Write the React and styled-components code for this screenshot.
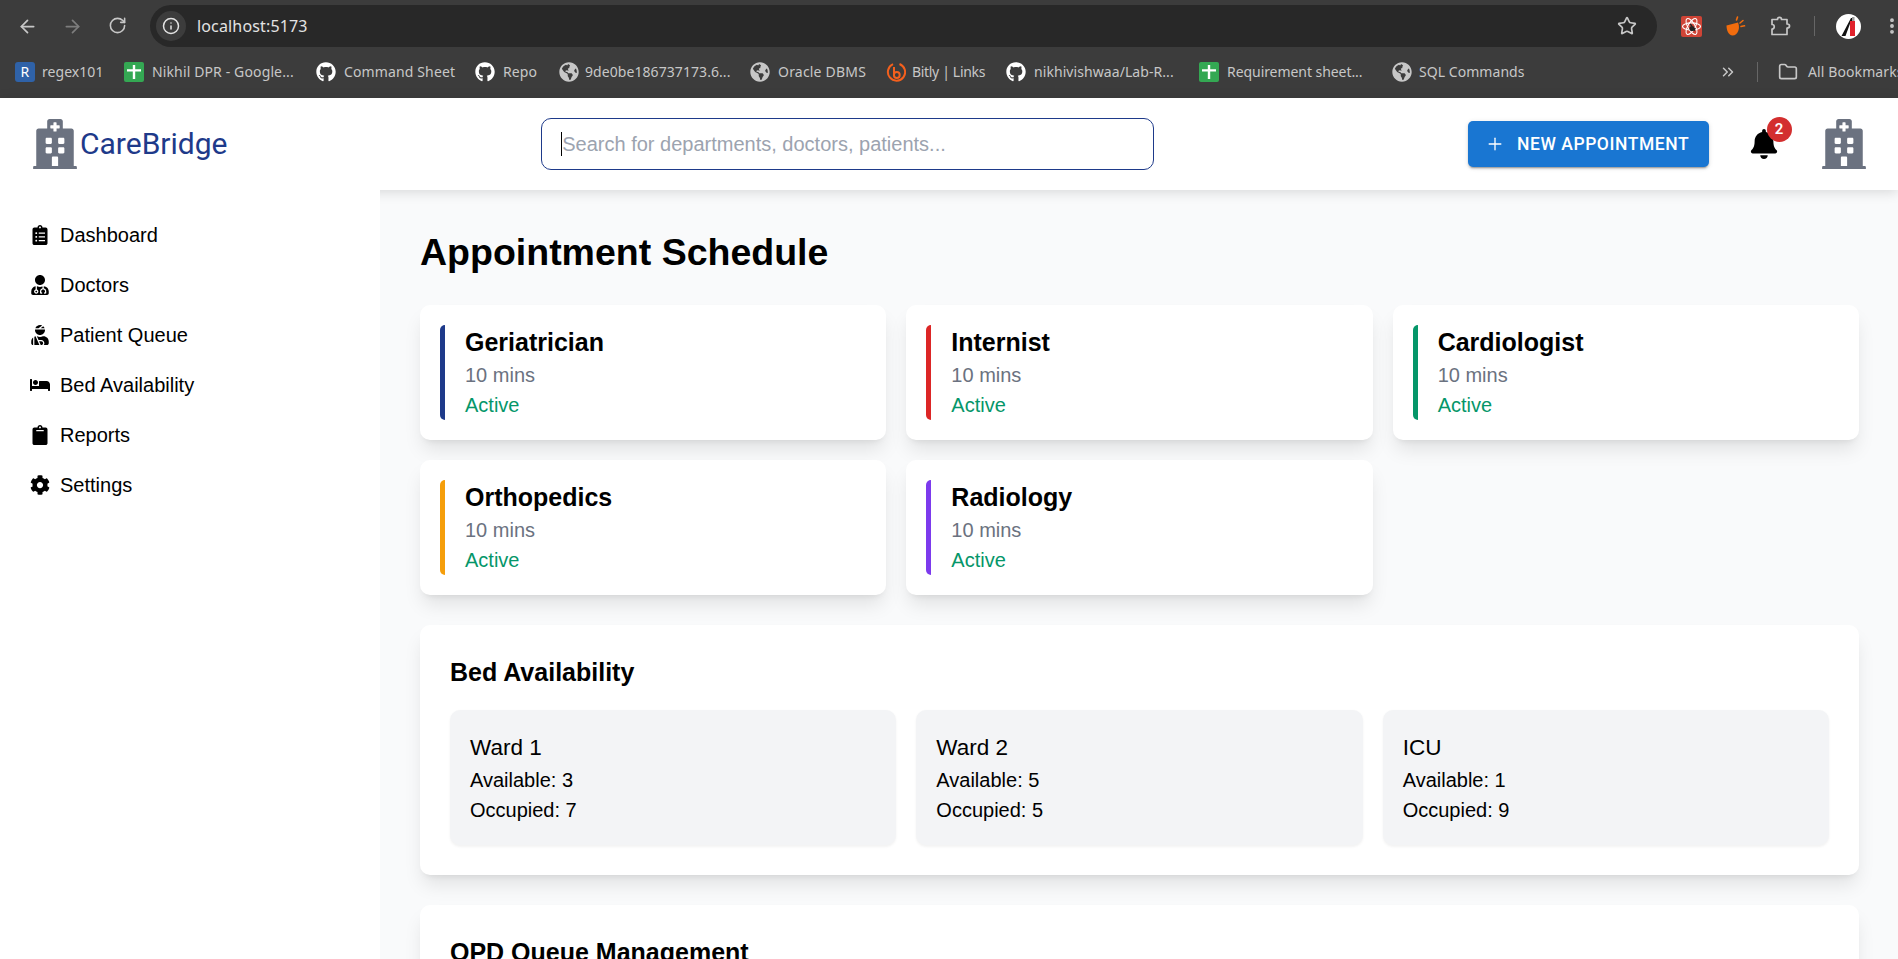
import React from 'react';
import styled, { createGlobalStyle } from 'styled-components';
import { ArrowLeft, ArrowRight, RotateCw, Info, Star, ChevronsRight, Folder, EllipsisVertical, Plus } from 'lucide-react';
import { FaGithub, FaGlobeAmericas } from 'react-icons/fa';
import { FaHospital, FaBell, FaClipboardList, FaUserMd, FaUserInjured, FaBed, FaClipboard, FaCog } from 'react-icons/fa';

const GlobalStyle = createGlobalStyle`
  html, body {
    margin: 0;
    height: 100%;
    overflow: hidden;
    background: #ffffff;
    font-family: "Liberation Sans", Arial, sans-serif;
  }
  * { box-sizing: border-box; }
`;

const cardShadow = '0 12.5px 18.75px -3.75px rgba(0, 0, 0, 0.1), 0 5px 7.5px -5px rgba(0, 0, 0, 0.1)';

const Page = styled.div`
  height: 959px;
  display: flex;
  flex-direction: column;
  overflow: hidden;
`;

/* browser chrome */
const BrowserBar = styled.div`
  flex: 0 0 98px;
  background: #3c3c3c;
  color: #c7c7c7;
  font-family: "Noto Sans", "Open Sans", sans-serif;
  overflow: hidden;
`;

const ToolRow = styled.div`
  height: 47px;
  padding-top: 5px;
  display: flex;
  align-items: center;
`;

const NavButton = styled.div`
  flex: 0 0 45px;
  display: flex;
  justify-content: center;
  color: ${(p) => (p.$dim ? '#7d7d7d' : '#c7c7c7')};
`;

const NavGroup = styled.div`
  flex: 0 0 150px;
  display: flex;
  padding-left: 5px;
`;

const AddressBar = styled.div`
  flex: 0 0 1507px;
  height: 42px;
  border-radius: 21px;
  background: #282828;
  display: flex;
  align-items: center;
  padding: 0 20px 0 6px;
`;

const SiteInfo = styled.div`
  width: 30px;
  height: 30px;
  border-radius: 50%;
  background: #3c3c3c;
  color: #e3e3e3;
  display: flex;
  align-items: center;
  justify-content: center;
  margin-right: 11px;
`;

const Url = styled.span`
  flex: 1;
  color: #e3e3e3;
  font-size: 16px;
  letter-spacing: 0.15px;
`;

const ExtGroup = styled.div`
  display: flex;
  align-items: center;
  padding-left: 11.5px;
  flex-shrink: 0;
`;

const ExtSlot = styled.div`
  flex: 0 0 ${(p) => p.$width}px;
  display: flex;
  justify-content: center;
`;

const ExtDivider = styled.div`
  width: 1px;
  height: 20px;
  background: #666666;
`;

const BookmarkRow = styled.div`
  height: 51px;
  display: flex;
  align-items: center;
  padding: 0 0 2px 15px;
`;

const BookmarkList = styled.div`
  flex: 0 0 1704px;
  display: flex;
  align-items: center;
`;

const Bookmark = styled.div`
  flex: 0 0 ${(p) => p.$width}px;
  display: flex;
  align-items: center;
  gap: ${(p) => p.$gap}px;
  font-size: 14px;
  letter-spacing: ${(p) => p.$spacing}px;
  white-space: nowrap;
`;

const BookmarkEnd = styled.div`
  display: flex;
  align-items: center;
  flex-shrink: 0;
  font-size: 14px;
  letter-spacing: 0.1px;
  white-space: nowrap;
`;

const BookmarkDivider = styled.div`
  width: 1px;
  height: 20px;
  background: #666666;
  margin: 0 20px 0 20px;
`;

const AllBookmarks = styled.span`
  margin-left: 10px;
`;

const RegexIcon = styled.span`
  width: 20px;
  height: 20px;
  border-radius: 3px;
  background: #2f62a8;
  color: #ffffff;
  font-size: 14px;
  line-height: 20px;
  text-align: center;
`;

/* app header */
const Header = styled.header`
  position: relative;
  z-index: 1;
  flex: 0 0 92px;
  background: #ffffff;
  display: flex;
  align-items: center;
  justify-content: space-between;
  padding: 0 29px 0 30px;
  box-shadow: 0 2px 12px rgba(0, 0, 0, 0.14);
`;

const Logo = styled.div`
  display: flex;
  align-items: center;
  color: #6b7280;
`;

const LogoText = styled.span`
  font-family: Roboto, sans-serif;
  font-size: 30px;
  color: #1e3a8a;
  margin-bottom: 2px;
`;

const SearchBox = styled.div`
  position: relative;
  width: 613px;
  height: 52px;

  &::before {
    content: '';
    position: absolute;
    left: 20px;
    top: 14px;
    width: 1px;
    height: 24px;
    background: #000000;
  }
`;

const SearchInput = styled.input`
  width: 100%;
  height: 100%;
  border: 1.25px solid #1e3a8a;
  border-radius: 10px;
  padding: 0 20px;
  font-family: "Liberation Sans", Arial, sans-serif;
  font-size: 20px;
  outline: none;
  caret-color: transparent;

  &::placeholder {
    color: #9ca3af;
    opacity: 1;
  }
`;

const HeaderRight = styled.div`
  display: flex;
  align-items: center;
  gap: 40px;
  color: #6b7280;
`;

const NewButton = styled.button`
  width: 241px;
  height: 46px;
  border: none;
  border-radius: 5px;
  background: #1976d2;
  color: #ffffff;
  font-family: Roboto, sans-serif;
  font-weight: 500;
  font-size: 17.5px;
  letter-spacing: 0.55px;
  text-transform: uppercase;
  display: flex;
  align-items: center;
  gap: 12px;
  padding: 0 0 0 17px;
  box-shadow: 0 3px 1px -2px rgba(0, 0, 0, 0.2), 0 2px 2px 0 rgba(0, 0, 0, 0.14), 0 1px 5px 0 rgba(0, 0, 0, 0.12);
`;

const BellWrap = styled.div`
  position: relative;
  width: 30px;
  height: 30px;
  color: #000000;
`;

const Badge = styled.span`
  position: absolute;
  top: -12.5px;
  left: 17.5px;
  width: 25px;
  height: 25px;
  border-radius: 50%;
  background: #d32f2f;
  color: #ffffff;
  font-family: Roboto, sans-serif;
  font-weight: 600;
  font-size: 15px;
  line-height: 25px;
  text-align: center;
`;

/* layout below the header */
const Body = styled.div`
  flex: 1;
  display: flex;
  min-height: 0;
`;

const Sidebar = styled.nav`
  position: relative;
  z-index: 2;
  flex: 0 0 380px;
  background: #ffffff;
  padding: 30px 30px;
  display: flex;
  flex-direction: column;
  gap: 20px;
`;

const NavItem = styled.div`
  display: flex;
  align-items: center;
  gap: 10px;
  font-size: 20px;
  line-height: 30px;
  color: #000000;
`;

const Main = styled.main`
  flex: 1;
  background: #f9fafb;
  padding: 40px 39px 40px 40px;
  overflow: hidden;
`;

const Title = styled.h1`
  margin: 0 0 30px;
  font-size: 37.5px;
  line-height: 45px;
  font-weight: 700;
  color: #000000;
`;

const Grid = styled.div`
  display: grid;
  grid-template-columns: repeat(3, 1fr);
  gap: 20px;
`;

const DoctorCard = styled.div`
  background: #ffffff;
  border-radius: 10px;
  padding: 20px;
  box-shadow: ${cardShadow};
`;

const DoctorInner = styled.div`
  border-left: 5px solid ${(p) => p.$color};
  border-radius: 5px;
  padding-left: 20px;
`;

const CardTitle = styled.h3`
  margin: 0;
  font-size: 25px;
  line-height: 35px;
  font-weight: 700;
  color: #000000;
`;

const Wait = styled.div`
  font-size: 20px;
  line-height: 30px;
  color: #6b7280;
`;

const Status = styled.div`
  font-size: 20px;
  line-height: 30px;
  color: #059669;
`;

const Panel = styled.section`
  margin-top: 30px;
  background: #ffffff;
  border-radius: 10px;
  padding: 30px;
  box-shadow: ${cardShadow};
`;

const PanelTitle = styled.h2`
  margin: 0 0 20px;
  font-size: 25px;
  line-height: 35px;
  font-weight: 700;
  color: #000000;
`;

const WardCard = styled.div`
  background: #f3f4f6;
  border-radius: 10px;
  padding: 20px;
  box-shadow: 0 1.25px 2.5px rgba(0, 0, 0, 0.05);
`;

const WardName = styled.div`
  font-size: 22.5px;
  line-height: 35px;
  color: #000000;
`;

const WardStat = styled.div`
  font-size: 20px;
  line-height: 30px;
  color: #000000;
`;

const SheetIcon = () => (
  <svg width="20" height="20" viewBox="0 0 20 20">
    <rect width="20" height="20" rx="2" fill="#34a853" />
    <path d="M8.8 3h2.4v4.2H17v2.4h-5.8V17H8.8V9.6H3V7.2h5.8z" fill="#ffffff" />
  </svg>
);

const BitlyIcon = () => (
  <svg width="20" height="22" viewBox="0 0 20 22" fill="none" stroke="#f4601d" strokeWidth="2">
    <path d="M7 3.2A8.6 8.6 0 1 0 13.5 3" />
    <path d="M8 6v9" />
    <circle cx="10.8" cy="14" r="2.9" />
  </svg>
);

const ReactExtIcon = () => (
  <svg width="21" height="21" viewBox="0 0 21 21">
    <rect width="21" height="21" rx="2" fill="#cf4436" />
    <g fill="none" stroke="#ffffff" strokeWidth="1.1">
      <ellipse cx="10.5" cy="10.5" rx="9" ry="3.6" />
      <ellipse cx="10.5" cy="10.5" rx="9" ry="3.6" transform="rotate(60 10.5 10.5)" />
      <ellipse cx="10.5" cy="10.5" rx="9" ry="3.6" transform="rotate(120 10.5 10.5)" />
    </g>
    <circle cx="11" cy="12.5" r="2.6" fill="#222222" />
    <path d="M9 8l2 2M14 12l-1 3" stroke="#222222" strokeWidth="1.5" />
  </svg>
);

const OrangeExtIcon = () => (
  <svg width="20" height="20" viewBox="0 0 20 20" fill="#f26c0d">
    <path d="M0.5 9.5L12 6.5C14.5 12 12 19.5 6.5 19.5C2.5 19.5 0.5 14 0.5 9.5z" />
    <g fill="none" stroke="#f26c0d" strokeWidth="1.6" strokeLinecap="round">
      <path d="M10.5 4L11.5 1" />
      <path d="M14 7L17 4.5" />
      <path d="M15 10.5L18.5 9.8" />
    </g>
  </svg>
);

const PuzzleIcon = () => (
  <svg width="22" height="20" viewBox="0 0 22 20" fill="none" stroke="#c7c7c7" strokeWidth="1.7" strokeLinejoin="round">
    <path d="M2 3.5H7.5C7.5 .6 11.5 .6 11.5 3.5H17V8C20.4 8 20.4 12 17 12V18.5H2V13C5 13 5 8.5 2 8.5z" />
  </svg>
);

const AvatarIcon = () => (
  <svg width="25" height="25" viewBox="0 0 25 25">
    <circle cx="12.5" cy="12.5" r="12.5" fill="#ffffff" />
    <path d="M5.5 22L15 4h2v3h-2L9.5 22z" fill="#111111" />
    <rect x="14" y="7" width="5" height="15" fill="#e0212b" />
    <rect x="16" y="3" width="2.5" height="4" fill="#9a9a9a" />
  </svg>
);

const githubIcon = <FaGithub size={20} color="#ffffff" />;
const globeIcon = <FaGlobeAmericas size={20} />;

const bookmarks = [
  { label: 'regex101', icon: <RegexIcon>R</RegexIcon>, width: 109, gap: 7, spacing: 0.05 },
  { label: 'Nikhil DPR - Google...', icon: <SheetIcon />, width: 192, gap: 8, spacing: 0.13 },
  { label: 'Command Sheet', icon: githubIcon, width: 159, gap: 8, spacing: 0.13 },
  { label: 'Repo', icon: githubIcon, width: 84, gap: 8, spacing: 0.13 },
  { label: '9de0be186737173.6...', icon: globeIcon, width: 191, gap: 6, spacing: 0.07 },
  { label: 'Oracle DBMS', icon: globeIcon, width: 136, gap: 8, spacing: 0.2 },
  { label: 'Bitly | Links', icon: <BitlyIcon />, width: 120, gap: 6, spacing: -0.33 },
  { label: 'nikhivishwaa/Lab-R...', icon: githubIcon, width: 193, gap: 8, spacing: 0.07 },
  { label: 'Requirement sheet...', icon: <SheetIcon />, width: 193, gap: 8, spacing: -0.06 },
  { label: 'SQL Commands', icon: globeIcon, width: 200, gap: 7, spacing: 0.05 },
];

const navItems = [
  { label: 'Dashboard', icon: FaClipboardList },
  { label: 'Doctors', icon: FaUserMd },
  { label: 'Patient Queue', icon: FaUserInjured },
  { label: 'Bed Availability', icon: FaBed },
  { label: 'Reports', icon: FaClipboard },
  { label: 'Settings', icon: FaCog },
];

const doctors = [
  { name: 'Geriatrician', color: '#1e3a8a' },
  { name: 'Internist', color: '#dc2626' },
  { name: 'Cardiologist', color: '#059669' },
  { name: 'Orthopedics', color: '#f59e0b' },
  { name: 'Radiology', color: '#7c3aed' },
];

const wards = [
  { name: 'Ward 1', available: 3, occupied: 7 },
  { name: 'Ward 2', available: 5, occupied: 5 },
  { name: 'ICU', available: 1, occupied: 9 },
];

const BrowserChrome = () => (
  <BrowserBar>
    <ToolRow>
      <NavGroup>
        <NavButton><ArrowLeft size={21} /></NavButton>
        <NavButton $dim><ArrowRight size={21} /></NavButton>
        <NavButton><RotateCw size={19} /></NavButton>
      </NavGroup>
      <AddressBar>
        <SiteInfo><Info size={18} /></SiteInfo>
        <Url>localhost:5173</Url>
        <Star size={20} />
      </AddressBar>
      <ExtGroup>
        <ExtSlot $width={45}><ReactExtIcon /></ExtSlot>
        <ExtSlot $width={45}><OrangeExtIcon /></ExtSlot>
        <ExtSlot $width={45}><PuzzleIcon /></ExtSlot>
        <ExtSlot $width={21}><ExtDivider /></ExtSlot>
        <ExtSlot $width={47}><AvatarIcon /></ExtSlot>
        <ExtSlot $width={41}><EllipsisVertical size={20} strokeWidth={2.6} /></ExtSlot>
      </ExtGroup>
    </ToolRow>
    <BookmarkRow>
      <BookmarkList>
        {bookmarks.map((b) => (
          <Bookmark key={b.label} $width={b.width} $gap={b.gap} $spacing={b.spacing}>{b.icon}{b.label}</Bookmark>
        ))}
      </BookmarkList>
      <BookmarkEnd>
        <ChevronsRight size={18} />
        <BookmarkDivider />
        <Folder size={20} />
        <AllBookmarks>All Bookmarks</AllBookmarks>
      </BookmarkEnd>
    </BookmarkRow>
  </BrowserBar>
);

const App = () => (
  <Page>
    <GlobalStyle />
    <BrowserChrome />
    <Header>
      <Logo>
        <FaHospital size={50} />
        <LogoText>CareBridge</LogoText>
      </Logo>
      <SearchBox>
        <SearchInput placeholder="Search for departments, doctors, patients..." />
      </SearchBox>
      <HeaderRight>
        <NewButton><Plus size={20} strokeWidth={1.6} />New Appointment</NewButton>
        <BellWrap>
          <FaBell size={30} />
          <Badge>2</Badge>
        </BellWrap>
        <FaHospital size={50} />
      </HeaderRight>
    </Header>
    <Body>
      <Sidebar>
        {navItems.map(({ label, icon: Icon }) => (
          <NavItem key={label}><Icon size={20} />{label}</NavItem>
        ))}
      </Sidebar>
      <Main>
        <Title>Appointment Schedule</Title>
        <Grid>
          {doctors.map((d) => (
            <DoctorCard key={d.name}>
              <DoctorInner $color={d.color}>
                <CardTitle>{d.name}</CardTitle>
                <Wait>10 mins</Wait>
                <Status>Active</Status>
              </DoctorInner>
            </DoctorCard>
          ))}
        </Grid>
        <Panel>
          <PanelTitle>Bed Availability</PanelTitle>
          <Grid>
            {wards.map((w) => (
              <WardCard key={w.name}>
                <WardName>{w.name}</WardName>
                <WardStat>Available: {w.available}</WardStat>
                <WardStat>Occupied: {w.occupied}</WardStat>
              </WardCard>
            ))}
          </Grid>
        </Panel>
        <Panel>
          <PanelTitle>OPD Queue Management</PanelTitle>
        </Panel>
      </Main>
    </Body>
  </Page>
);

export default App;
